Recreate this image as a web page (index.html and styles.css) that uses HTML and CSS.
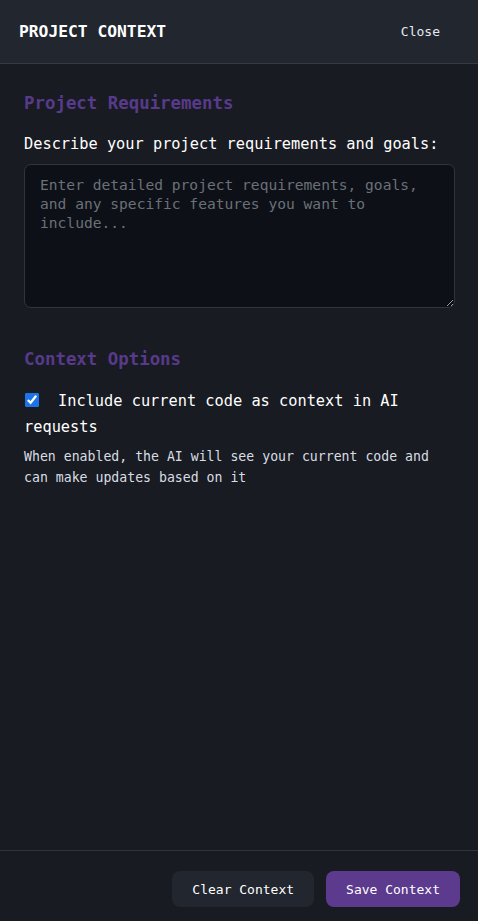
FILE: index.html
```html
<!DOCTYPE html>
<html lang="en">
<head>
<meta charset="utf-8">
<title>Project Context</title>
<link rel="stylesheet" href="styles.css">
</head>
<body>
<div class="panel">
  <header class="panel-header">
    <h1 class="panel-title">PROJECT CONTEXT</h1>
    <button class="close-btn" type="button">Close</button>
  </header>
  <main class="panel-body">
    <section class="section">
      <h2 class="section-title">Project Requirements</h2>
      <label class="field-label" for="req">Describe your project requirements and goals:</label>
      <textarea id="req" class="req-input" placeholder="Enter detailed project requirements, goals, and any specific features you want to include..."></textarea>
    </section>
    <section class="section options">
      <h2 class="section-title">Context Options</h2>
      <label class="check-row"><input type="checkbox" class="check" checked><span class="check-text">Include current code as context in AI requests</span></label>
      <p class="hint">When enabled, the AI will see your current code and can make updates based on it</p>
    </section>
  </main>
  <footer class="panel-footer">
    <button class="btn btn-secondary" type="button">Clear Context</button>
    <button class="btn btn-primary" type="button">Save Context</button>
  </footer>
</div>
</body>
</html>
```
FILE: styles.css
```css
* { box-sizing: border-box; }
html, body { margin: 0; padding: 0; height: 100%; }
body {
  background: #181b22;
  color: #f0f3f6;
  font-family: "DejaVu Sans Mono", monospace;
}
.panel {
  height: 921px;
  display: flex;
  flex-direction: column;
}
.panel-header {
  height: 64px;
  flex: none;
  background: #22262e;
  border-bottom: 1px solid #353a42;
  display: flex;
  align-items: center;
  justify-content: space-between;
  padding: 0 20px 0 19px;
}
.panel-title {
  margin: 0;
  font-size: 16.3px;
  font-weight: bold;
  color: #ffffff;
  letter-spacing: 0;
}
.close-btn {
  background: transparent;
  border: none;
  color: #e6e9ee;
  font-family: inherit;
  font-size: 13px;
  padding: 6px 18px;
  cursor: pointer;
}
.panel-body {
  flex: 1;
  padding: 28px 23px 0 24px;
}
.section-title {
  margin: 0;
  font-size: 17.4px;
  font-weight: bold;
  color: #583a8a;
  line-height: 22px;
}
.field-label {
  display: block;
  margin-top: 20px;
  font-size: 15.3px;
  line-height: 20px;
  color: #ffffff;
}
.req-input {
  display: block;
  width: 100%;
  height: 144px;
  margin-top: 10px;
  background: #0d1017;
  border: 1px solid #30353d;
  border-radius: 7px;
  padding: 10px 15px;
  color: #e6e9ee;
  font-family: inherit;
  font-size: 14.6px;
  line-height: 19px;
  resize: vertical;
}
.req-input::placeholder { color: #6b7079; }
.options { margin-top: 40px; }
.check-row {
  display: block;
  margin-top: 18px;
  font-size: 15.3px;
  line-height: 26px;
  color: #ffffff;
}
.check {
  width: 14px;
  height: 14px;
  margin: 0 19px 0 1px;
  vertical-align: -1px;
  accent-color: #1a73e8;
}
.hint {
  margin: 6px 0 0;
  font-size: 13.2px;
  line-height: 21px;
  color: #d9dde3;
}
.panel-footer {
  flex: none;
  border-top: 1px solid #30353d;
  display: flex;
  justify-content: flex-end;
  gap: 12px;
  padding: 20px 18px 14px;
}
.btn {
  height: 36px;
  border: none;
  border-radius: 8px;
  font-family: inherit;
  font-size: 13px;
  color: #ffffff;
  padding: 0 20px;
  cursor: pointer;
}
.btn-secondary { background: #22262e; }
.btn-primary { background: #5c3a8e; }
```
